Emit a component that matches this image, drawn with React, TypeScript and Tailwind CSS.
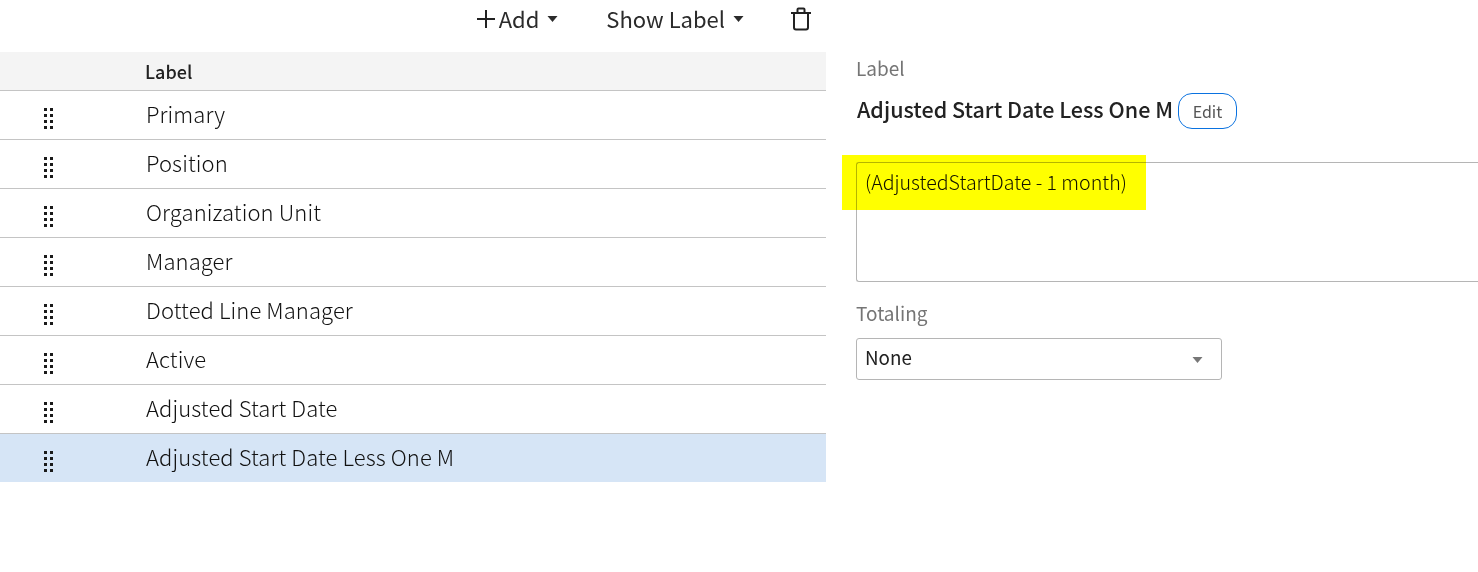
import React from 'react';

const rows = [
  'Primary',
  'Position',
  'Organization Unit',
  'Manager',
  'Dotted Line Manager',
  'Active',
  'Adjusted Start Date',
  'Adjusted Start Date Less One M',
];

const font = "font-['Noto_Sans_CJK_JP','Noto_Sans',sans-serif]";

const Caret = () => (
  <svg width="11" height="6" viewBox="0 0 11 6" className="ml-2 mt-[1px]">
    <path d="M0.5 0H10.5L5.5 6Z" fill="#2b2b2b" />
  </svg>
);

const DragHandle = () => (
  <svg width="9" height="21" viewBox="0 0 9 21" fill="#1a1a1a">
    {[0, 6, 12, 18].map((y) => (
      <React.Fragment key={y}>
        <rect x="0" y={y} width="3" height="3" />
        <rect x="6" y={y} width="3" height="3" />
      </React.Fragment>
    ))}
  </svg>
);

const Trash = () => (
  <svg width="20" height="24" viewBox="0 0 20 24" fill="none" stroke="#222" strokeWidth="2" strokeLinejoin="round">
    <path d="M0 6H20" />
    <path d="M6.5 6V2.5Q6.5 1.5 7.5 1.5H12.5Q13.5 1.5 13.5 2.5V6" />
    <path d="M3 6V20.5Q3 22.5 5 22.5H15Q17 22.5 17 20.5V6" />
  </svg>
);

export default function App() {
  return (
    <div className={`${font} flex w-[1478px] h-[572px] overflow-hidden bg-white text-[#2b2b2b]`}>
      {/* Left: field list */}
      <div className="w-[826px] shrink-0">
        <div className="flex items-center justify-end h-[52px] pb-[15px] text-[22px]">
          <div className="flex items-center">
            <svg width="18" height="18" viewBox="0 0 18 18" stroke="#222" strokeWidth="2" className="mr-[4px] mt-[1px]">
              <path d="M9 0V18M0 9H18" />
            </svg>
            <span>Add</span>
            <Caret />
          </div>
          <div className="flex items-center ml-[48px]">
            <span>Show Label</span>
            <Caret />
          </div>
          <div className="ml-[47px] mr-[15px] flex mt-[1px]">
            <Trash />
          </div>
        </div>

        <div className="flex items-center h-[39px] bg-[#f4f4f4] border-b border-[#c4c4c4] pl-[145px] text-[18px] font-medium text-[#222]">
          Label
        </div>

        {rows.map((row, i) => {
          const selected = i === rows.length - 1;
          return (
            <div
              key={row}
              className={`flex items-center ${selected ? 'h-[48px] bg-[#d6e5f6]' : 'h-[49px] border-b border-[#c4c4c4]'}`}
            >
              <div className="w-[146px] pl-[44px] pt-[7px] shrink-0 flex">
                <DragHandle />
              </div>
              <span className="text-[22px] font-light tracking-[0.1px] text-[#111] mb-[3px]">{row}</span>
            </div>
          );
        })}
      </div>

      {/* Right: field details */}
      <div className="relative flex-1 pl-[30px] pt-[54px]">
        <div className="text-[19px] leading-[28px] text-[#757575]">Label</div>
        <div className="flex items-center mt-[11px] h-[36px]">
          <span className="text-[21.5px] font-medium text-[#222] pl-[1px] mb-[3px]">Adjusted Start Date Less One M</span>
          <button className="ml-[5px] w-[59px] h-[36px] rounded-[14px] border border-[#0a72e0] text-[16px] text-[#555]">
            Edit
          </button>
        </div>

        <div className="mt-[33px] h-[120px] border border-r-0 border-[#b5b5b5] rounded-l-[3px] pl-[8px] pt-[5px] text-[19.6px] leading-[28px] font-light text-[#111]">
          (AdjustedStartDate - 1 month)
        </div>

        <div className="mt-[17px] text-[19px] leading-[28px] text-[#757575]">Totaling</div>
        <div className="flex items-center justify-between mt-[11px] w-[366px] h-[42px] border border-[#b5b5b5] rounded-[3px] pl-[8px] pr-[18px] text-[18.8px] text-[#222]">
          <span className="mb-[3px]">None</span>
          <svg width="11" height="6" viewBox="0 0 11 6" className="mt-[2px]">
            <path d="M0.5 0H10.5L5.5 6Z" fill="#777" />
          </svg>
        </div>

        {/* marker highlight over the formula */}
        <div className="absolute left-[16px] top-[155px] w-[304px] h-[55px] bg-[#ffff00] mix-blend-multiply" />
      </div>
    </div>
  );
}
